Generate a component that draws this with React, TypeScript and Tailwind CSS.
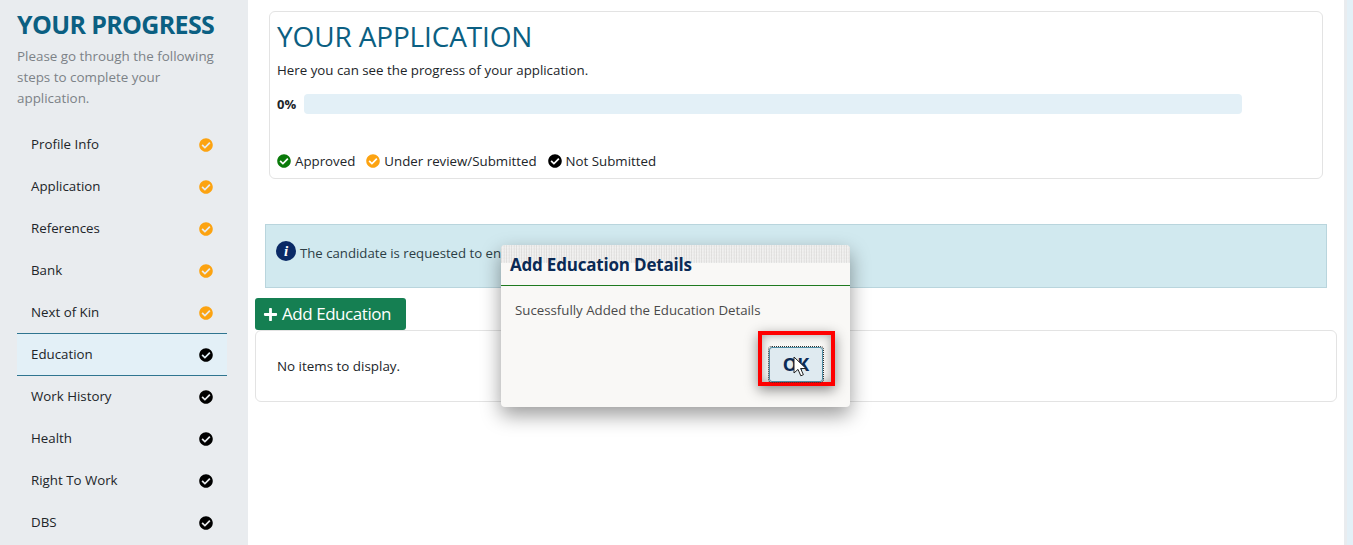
import { FaCheckCircle, FaPlus } from 'react-icons/fa';

const steps = [
  { name: 'Profile Info', done: true },
  { name: 'Application', done: true },
  { name: 'References', done: true },
  { name: 'Bank', done: true },
  { name: 'Next of Kin', done: true },
  { name: 'Education', done: false, active: true },
  { name: 'Work History', done: false },
  { name: 'Health', done: false },
  { name: 'Right To Work', done: false },
  { name: 'DBS', done: false },
];

function Sidebar() {
  return (
    <aside className="w-[248px] shrink-0 bg-[#e9ecef] pl-[17px] pr-[21px] pt-[9px]">
      <h2 className="text-[25px] leading-[30px] font-bold text-[#0b5f82] tracking-[-0.65px] whitespace-nowrap">YOUR PROGRESS</h2>
      <p className="mt-[7px] w-[200px] text-[13.4px] leading-[21px] text-[#7c8287]">
        Please go through the following steps to complete your application.
      </p>
      <ul className="mt-[15px]">
        {steps.map((step) => (
          <li
            key={step.name}
            className={`flex items-center justify-between pl-[14px] pr-[14px] text-[13.3px] text-[#212529] ${
              step.active ? '-mt-px h-[43px] bg-[#e3f0f7] border-y border-[#2f7590]' : 'h-[42px]'
            }`}
          >
            <span>{step.name}</span>
            <FaCheckCircle className={`w-[14px] h-[14px] ${step.done ? 'text-[#fca311]' : 'text-black'}`} />
          </li>
        ))}
      </ul>
    </aside>
  );
}

function Legend({ color, label }: { color: string; label: string }) {
  return (
    <span className="flex items-center gap-[4px]">
      <FaCheckCircle className={`w-[14px] h-[14px] ${color}`} />
      {label}
    </span>
  );
}

function Modal() {
  return (
    <div className="absolute left-[501px] top-[245px] w-[349px] h-[162px] rounded-[4px] bg-[#f9f8f6] shadow-[0_8px_20px_rgba(0,0,0,0.4)]">
      <div className="absolute inset-x-0 top-0 h-[18px] rounded-t-[4px] bg-[repeating-linear-gradient(90deg,rgba(0,0,0,0.14)_0px,rgba(0,0,0,0.01)_2px,rgba(0,0,0,0.11)_3px,rgba(0,0,0,0.02)_5px),repeating-linear-gradient(0deg,rgba(255,255,255,0.7)_0px,rgba(255,255,255,0)_2px,rgba(255,255,255,0.6)_3px)]" />
      <div className="relative h-[41px] border-b border-[#1f7a1f] pl-[9px] pt-[8px] text-[17px] leading-[24px] font-bold text-[#0b2a55] tracking-[-0.2px]">
        Add Education Details
      </div>
      <p className="pl-[14px] pt-[14px] text-[13.25px] leading-[20px] text-[#4a4a4a]">
        Sucessfully Added the Education Details
      </p>
      <div className="absolute left-[257px] top-[86px] w-[77px] h-[55px] border-[4px] border-[#ff0000] shadow-[0_4px_12px_rgba(0,0,0,0.45),inset_0_0_10px_rgba(0,0,0,0.35)]">
        <button className="absolute left-[7px] top-[12px] w-[54px] h-[35px] rounded-[3px] bg-[#dfeaf0] border border-[#4f8ca3] outline-1 outline-dotted outline-[#333] text-[18px] font-bold text-[#0b2a55]">
          OK
        </button>
        <svg className="absolute left-[31px] top-[21px]" width="16" height="22" viewBox="0 0 16 22">
          <path d="M1 1v16l4-3.6 2.8 6.4 2.6-1.1-2.8-6.2h5.4z" fill="#fff" stroke="#222" strokeWidth="1" />
        </svg>
      </div>
    </div>
  );
}

export default function App() {
  return (
    <div className="relative flex h-[545px] overflow-hidden bg-white font-['Open_Sans',sans-serif]">
      <Sidebar />
      <main className="flex-1 min-w-0 pt-[11px]">
        <section className="mx-[21px] h-[168px] rounded-[6px] border border-[#e3e3e3] pl-[7px] pt-[5px]">
          <h1 className="text-[28px] leading-[38px] font-medium text-[#0b5f82] tracking-[-0.15px]">YOUR APPLICATION</h1>
          <p className="mt-[5px] text-[13.3px] leading-[20px] text-[#212529]">Here you can see the progress of your application.</p>
          <div className="mt-[13px] flex items-center gap-[8px]">
            <span className="pt-[2px] text-[13px] font-bold text-[#212529]">0%</span>
            <div className="w-[938px] h-[20px] rounded-[4px] bg-[#e3f0f7]" />
          </div>
          <div className="mt-[36px] flex gap-[11px] text-[13.3px] leading-[20px] text-[#212529]">
            <Legend color="text-[#0a7a0a]" label="Approved" />
            <Legend color="text-[#fca311]" label="Under review/Submitted" />
            <Legend color="text-black" label="Not Submitted" />
          </div>
        </section>
        <div className="mt-[45px] mx-[17px] h-[64px] border border-[#b9d5dd] bg-[#d1e9ef] pl-[10px] pt-[16px] flex items-start gap-[4px] text-[13.2px] leading-[24px] text-[#2c3e45]">
          <span className="w-[20px] h-[20px] rounded-full bg-[#0a2a66] flex items-center justify-center text-white italic font-bold text-[15px] leading-none font-['Liberation_Serif',serif]">i</span>
          <span>The candidate is requested to enter the education details and submit it for review.</span>
        </div>
        <button className="ml-[7px] mt-[10px] flex items-center gap-[4px] w-[151px] h-[32px] rounded-[3px] bg-[#157f52] pl-[8px] text-[17px] text-white tracking-[-0.45px]">
          <FaPlus className="w-[15px] h-[15px]" />
          Add Education
        </button>
        <div className="mx-[7px] h-[72px] rounded-[6px] border border-[#e3e3e3] pl-[21px] pt-[1px] flex items-center text-[13.4px] text-[#212529]">
          No items to display.
        </div>
      </main>
      <div className="w-[9px] shrink-0 border-l-[3px] border-[#e9ecef] bg-[#e3f0f7]" />
      <Modal />
    </div>
  );
}
